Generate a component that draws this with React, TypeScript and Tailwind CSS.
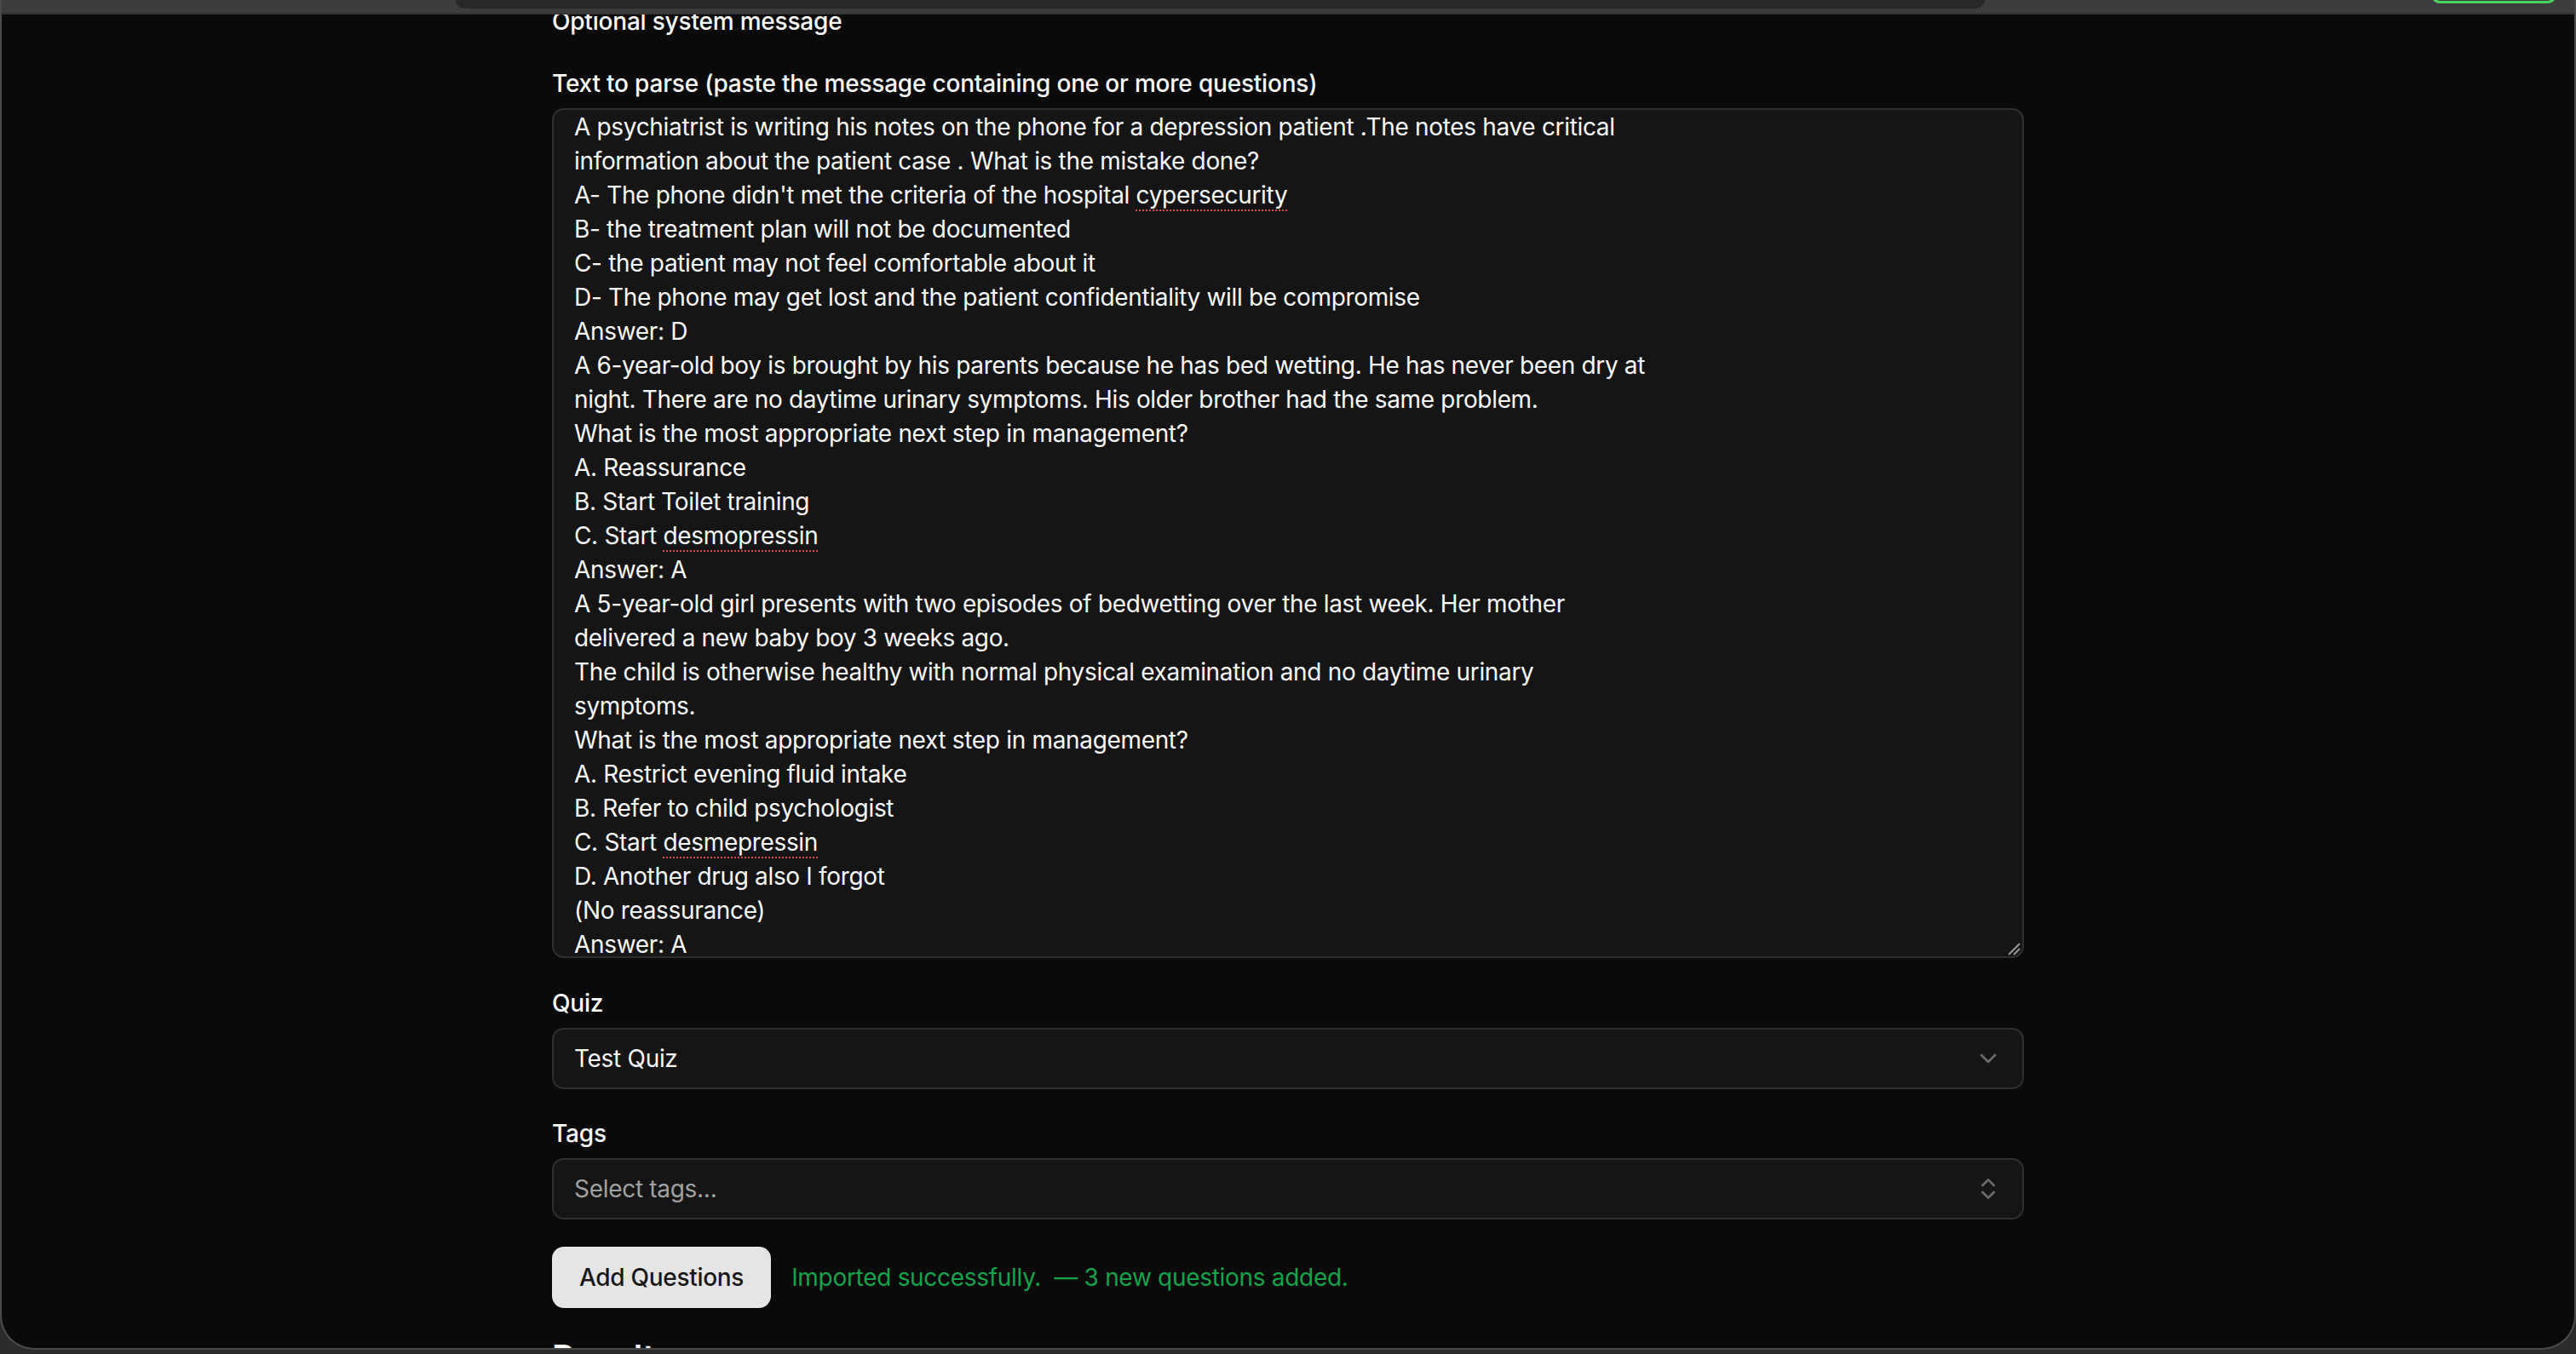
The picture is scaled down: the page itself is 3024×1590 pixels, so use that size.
import { ChevronDown, ChevronsUpDown } from "lucide-react";

const font = { fontFamily: "Inter, 'Noto Sans', sans-serif" };

type Piece = string | { typo: string };

const lines: Piece[][] = [
  ["A psychiatrist is writing his notes on the phone for a depression patient .The notes have critical"],
  ["information about the patient case . What is the mistake done?"],
  ["A- The phone didn't met the criteria of the hospital ", { typo: "cypersecurity" }],
  ["B- the treatment plan will not be documented"],
  ["C- the patient may not feel comfortable about it"],
  ["D- The phone may get lost and the patient confidentiality will be compromise"],
  ["Answer: D"],
  ["A 6-year-old boy is brought by his parents because he has bed wetting. He has never been dry at"],
  ["night. There are no daytime urinary symptoms. His older brother had the same problem."],
  ["What is the most appropriate next step in management?"],
  ["A. Reassurance"],
  ["B. Start Toilet training"],
  ["C. Start ", { typo: "desmopressin" }],
  ["Answer: A"],
  ["A 5-year-old girl presents with two episodes of bedwetting over the last week. Her mother"],
  ["delivered a new baby boy 3 weeks ago."],
  ["The child is otherwise healthy with normal physical examination and no daytime urinary"],
  ["symptoms."],
  ["What is the most appropriate next step in management?"],
  ["A. Restrict evening fluid intake"],
  ["B. Refer to child psychologist"],
  ["C. Start ", { typo: "desmepressin" }],
  ["D. Another drug also I forgot"],
  ["(No reassurance)"],
  ["Answer: A"],
];

function Label({ children }: { children: React.ReactNode }) {
  return (
    <p className="text-[28px] leading-[28px] font-medium tracking-[-0.2px] text-[#fafafa]">
      {children}
    </p>
  );
}

function ParseBox() {
  return (
    <div className="relative mt-[15px] h-[998px] overflow-hidden rounded-[14px] border-2 border-[#2f2f2f] bg-[#151515] px-[24px]">
      {lines.map((line, i) => (
        <div
          key={i}
          className="h-[40px] whitespace-pre text-[28px] leading-[40px] tracking-[-0.33px] text-[#fafafa]"
        >
          {line.map((p, j) =>
            typeof p === "string" ? (
              <span key={j}>{p}</span>
            ) : (
              <span
                key={j}
                className="underline decoration-dotted decoration-[#e5484d] decoration-2 underline-offset-[7px]"
              >
                {p.typo}
              </span>
            )
          )}
        </div>
      ))}
      <svg
        className="absolute right-[2px] bottom-[1px]"
        width="16"
        height="16"
        viewBox="0 0 16 16"
      >
        <path d="M15 2 L2 15 M15 8 L8 15" stroke="#9a9a9a" strokeWidth="2" />
      </svg>
    </div>
  );
}

function SelectBox({
  text,
  muted,
  updown,
}: {
  text: string;
  muted?: boolean;
  updown?: boolean;
}) {
  return (
    <div className="mt-[15px] flex h-[72px] items-center justify-between rounded-[14px] border-2 border-[#2f2f2f] bg-[#151515] px-[24px]">
      <span
        className={
          muted
            ? "text-[28px] tracking-[-0.3px] text-[#a1a1a1]"
            : "text-[28px] tracking-[-0.3px] text-[#fafafa]"
        }
      >
        {text}
      </span>
      {updown ? (
        <ChevronsUpDown className="size-[32px] text-[#6b6b6b]" strokeWidth={2} />
      ) : (
        <ChevronDown className="size-[32px] text-[#6b6b6b]" strokeWidth={2} />
      )}
    </div>
  );
}

export default function App() {
  return (
    <div className="h-[1590px] w-[3024px] overflow-hidden bg-[#2b2d2b]" style={font}>
      <div className="relative h-[1585px] overflow-hidden rounded-b-[40px] border-x-2 border-b-2 border-[#4a4a4c] bg-[#0a0a0a]">
        <div className="mx-auto w-[1728px] pt-[11px]">
          <Label>Optional system message</Label>

          <div className="mt-[45px]">
            <Label>Text to parse (paste the message containing one or more questions)</Label>
          </div>
          <ParseBox />

          <div className="mt-[39px]">
            <Label>Quiz</Label>
          </div>
          <SelectBox text="Test Quiz" />

          <div className="mt-[38px]">
            <Label>Tags</Label>
          </div>
          <SelectBox text="Select tags..." muted updown />

          <div className="mt-[32px] flex items-center gap-[24px]">
            <button className="h-[72px] rounded-[14px] bg-[#e5e5e5] px-[32px] text-[28px] font-medium tracking-[-0.3px] text-[#171717]">
              Add Questions
            </button>
            <span className="whitespace-pre text-[28px] tracking-[-0.3px] text-[#16a34a]">
              {"Imported successfully.  — 3 new questions added."}
            </span>
          </div>

          <h2 className="mt-[30px] text-[40px] leading-[56px] font-semibold text-[#fafafa]">
            Results
          </h2>
        </div>

        {/* window toolbar over the scrolled page */}
        <div className="absolute inset-x-0 top-0 h-[17px] border-b-2 border-dotted border-[#2c2c2e] bg-[#3c3d3f]">
          <div className="absolute top-0 left-[533px] h-[10px] w-[1795px] rounded-b-[12px] bg-[#27282a]" />
          <div className="absolute top-[-20px] left-[2851px] h-[24px] w-[149px] rounded-[12px] border-[3px] border-[#4cd35e]" />
        </div>
      </div>
    </div>
  );
}
